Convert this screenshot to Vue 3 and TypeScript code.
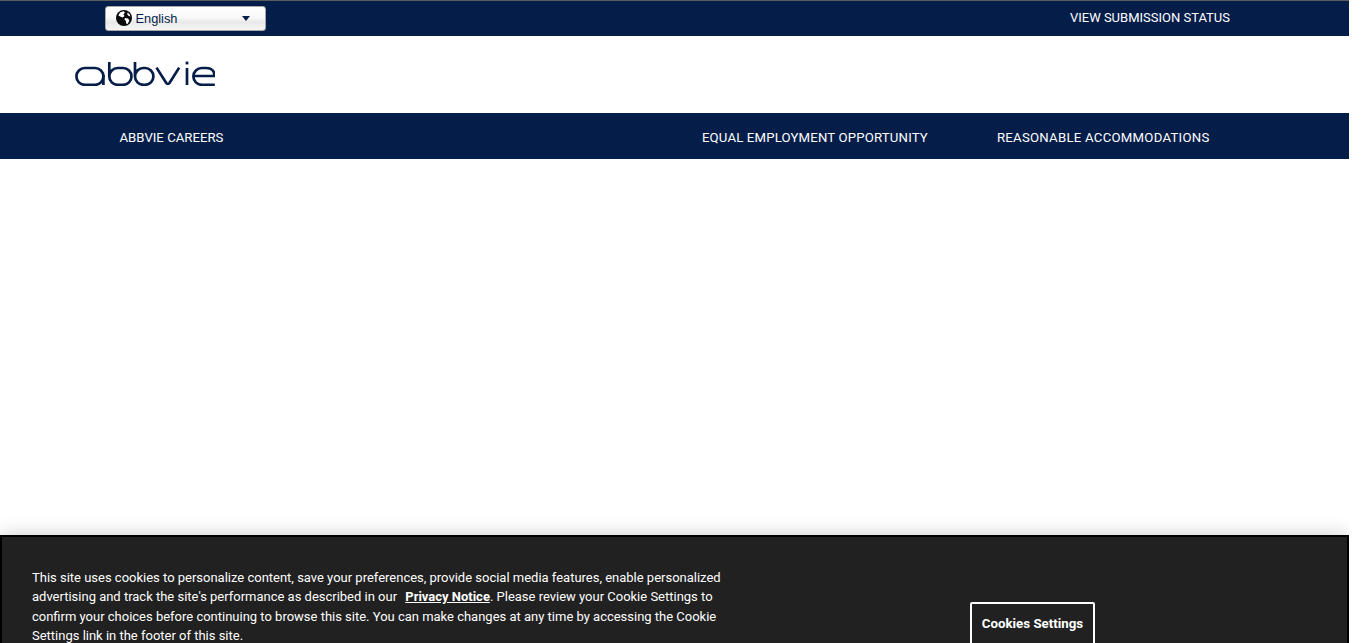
<script setup lang="ts">
const navLeft: string = 'ABBVIE CAREERS'
const navRight: string[] = ['EQUAL EMPLOYMENT OPPORTUNITY', 'REASONABLE ACCOMMODATIONS']
</script>

<template>
  <div class="page">
    <header class="topbar">
      <div class="lang">
        <svg class="globe" viewBox="0 0 16 16" width="16" height="16">
          <circle cx="8" cy="8" r="8" fill="#0b0b0b" />
          <path d="M4 2.4 7.6 1.2 9 2.6 7.4 4.6 8.6 6 6.6 7.6 4.2 6.6 2.4 5.6ZM9 8l3 .6 1.4 2L11.6 14l-1.4-.6-.4-2.6L8.4 9.6ZM11.6 2.6l2 1.6.8 2.2-2-.6-1.2-1.6Z" fill="#fff" />
        </svg>
        <span class="lang-text">English</span>
        <span class="caret"></span>
      </div>
      <a class="status">VIEW SUBMISSION STATUS</a>
    </header>
    <div class="logo-row">
      <svg class="logo" viewBox="0 0 140 26" width="140" height="26" fill="none" stroke="#071d49" stroke-width="2.7">
        <rect x="1.4" y="8" width="27" height="16.8" rx="8.4" />
        <path d="M28.4 15v10" />
        <path d="M34.3 2v14.4a8.4 8.4 0 0 0 8.4 8.4h5.4a8.4 8.4 0 0 0 0-16.8h-5.4a8.4 8.4 0 0 0-8.4 8.4" />
        <path d="M60 2v14.4a8.4 8.4 0 0 0 8.4 8.4h1.6a8.4 8.4 0 0 0 0-16.8h-1.6a8.4 8.4 0 0 0-8.4 8.4" />
        <path d="M81.5 7.6l9.6 15.2c1 1.5 2.5 1.5 3.5 0l9.6-15.2" />
        <path d="M112 8v17" />
        <path d="M110.6 3h2.8" stroke-width="2.8" />
        <path d="M139.8 24.8h-13a8.4 8.4 0 0 1 0-16.8h4.6c4.8 0 8 2.7 8 7.4v.6h-21" />
      </svg>
    </div>
    <nav class="navbar">
      <a class="nav-left">{{ navLeft }}</a>
      <div class="nav-right">
        <a v-for="item in navRight" :key="item">{{ item }}</a>
      </div>
    </nav>
    <aside class="cookie">
      <p class="cookie-text">
        This site uses cookies to personalize content, save your preferences, provide social media features, enable personalized advertising and track the site's performance as described in our <a class="privacy">Privacy Notice</a>. Please review your Cookie Settings to confirm your choices before continuing to browse this site. You can make changes at any time by accessing the Cookie Settings link in the footer of this site.
      </p>
      <button class="settings">Cookies Settings</button>
    </aside>
  </div>
</template>

<style>
html, body { margin: 0; overflow: hidden; background: #fff; }
</style>

<style scoped>
.page {
  width: 1349px;
  height: 643px;
  font-family: Roboto, "Liberation Sans", sans-serif;
  position: relative;
  overflow: hidden;
}
.topbar {
  height: 35px;
  border-top: 1px solid #5c5c5c;
  background: #051d49;
  display: flex;
  justify-content: space-between;
  align-items: center;
  padding: 0 119px 0 105px;
}
.lang {
  width: 149px;
  height: 23px;
  margin-top: -1px;
  border: 1px solid #a8a8a8;
  border-radius: 3px;
  background: linear-gradient(#ffffff, #f9f9f9 45%, #e9e9e9 65%, #f6f6f6);
  display: flex;
  align-items: center;
  padding-left: 10px;
}
.globe { flex: none; }
.lang-text {
  margin-left: 3.5px;
  padding-top: 2px;
  font: 12.8px/1 "Liberation Sans", Arial, sans-serif;
  color: #071d49;
  flex: 1;
}
.caret {
  width: 0;
  height: 0;
  border-left: 4.5px solid transparent;
  border-right: 4.5px solid transparent;
  border-top: 5px solid #071d49;
  margin-right: 15px;
}
.status {
  color: #fff;
  font-size: 13px;
  line-height: 16px;
  margin-top: -2px;
}
.logo-row {
  height: 77px;
  padding: 24px 0 0 75px;
  box-sizing: border-box;
}
.logo { display: block; }
.navbar {
  height: 46px;
  background: #051d49;
  color: #fff;
  display: flex;
  align-items: center;
  justify-content: space-between;
  padding: 3px 139.5px 0 119.5px;
  box-sizing: border-box;
  font-size: 13.2px;
  line-height: 16px;
}
.nav-right {
  display: flex;
  gap: 69px;
  letter-spacing: 0.17px;
}
.nav-right a:last-child {
  letter-spacing: 0.25px;
}
.cookie {
  position: absolute;
  left: 0;
  top: 535px;
  width: 1349px;
  height: 130px;
  box-sizing: border-box;
  background: #212121;
  border: 2px solid #000;
  box-shadow: 0 0 18px rgba(0, 0, 0, 0.2);
  color: #fff;
}
.cookie-text {
  position: absolute;
  left: 30px;
  top: 30.6px;
  width: 700px;
  margin: 0;
  font-size: 12.99px;
  line-height: 19.47px;
}
.privacy {
  font-weight: 700;
  text-decoration: underline;
  margin-left: 5px;
}
.settings {
  position: absolute;
  left: 968px;
  top: 65px;
  width: 125px;
  height: 43px;
  box-sizing: border-box;
  background: transparent;
  border: 2px solid #fff;
  border-radius: 2px;
  color: #fff;
  font: 700 13.3px Roboto, sans-serif;
  padding: 0;
}
</style>
